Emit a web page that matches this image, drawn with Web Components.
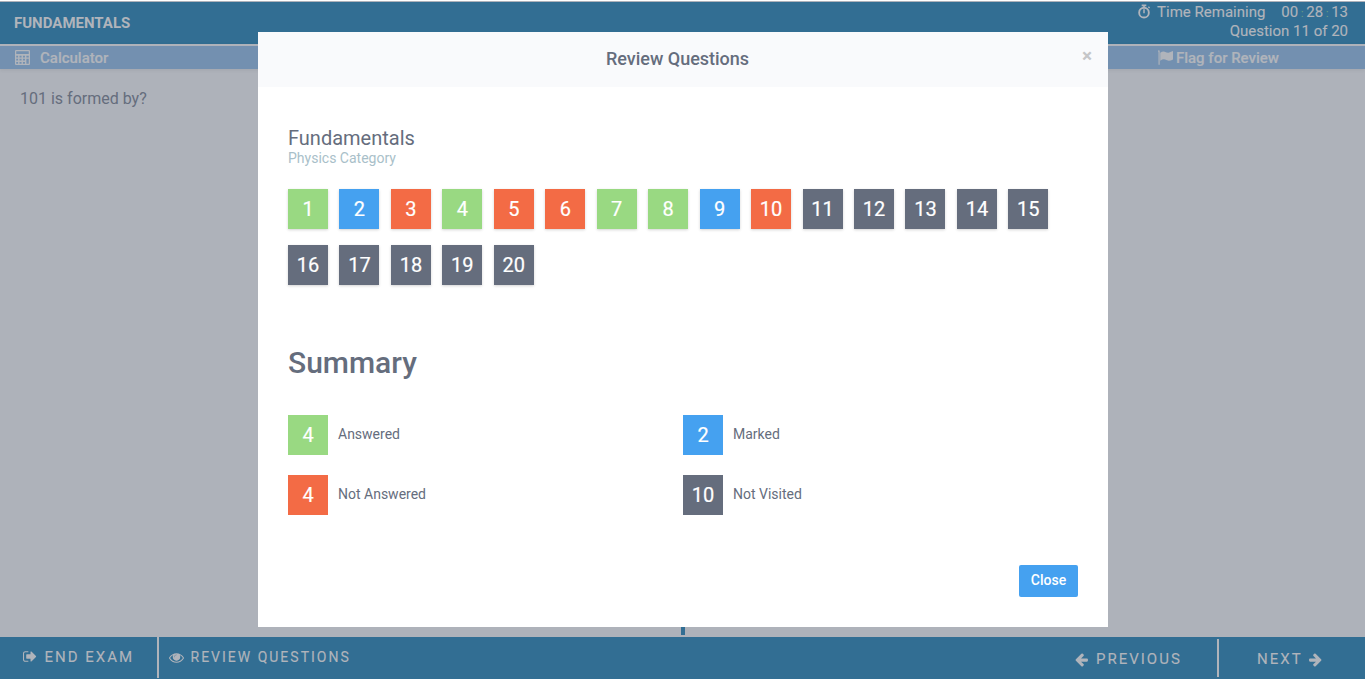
<!DOCTYPE html>
<html lang="en">
<head>
<meta charset="utf-8">
<title>Fundamentals</title>
<style>
html, body { margin: 0; height: 100%; overflow: hidden; }
body { font-family: Roboto, "Liberation Sans", sans-serif; color: #656d7d; background: #aeb2ba; }
</style>
</head>
<body>
<exam-page></exam-page>
<script>
const ICONS = {
  out: '<path d="M640 1440q0 4 1 20t.5 26.5-3 23.5-10 19.5-20.5 6.5h-320q-119 0-203.5-84.5t-84.5-203.5v-704q0-119 84.5-203.5t203.5-84.5h320q13 0 22.5 9.5t9.5 22.5q0 4 1 20t.5 26.5-3 23.5-10 19.5-20.5 6.5h-320q-66 0-113 47t-47 113v704q0 66 47 113t113 47h312l11.5 1 11.5 3 8 5.5 7 9 2 13.5zm928-544q0 26-19 45l-544 544q-19 19-45 19t-45-19-19-45v-288h-448q-26 0-45-19t-19-45v-384q0-26 19-45t45-19h448v-288q0-26 19-45t45-19 45 19l544 544q19 19 19 45z"/>',
  eye: '<path d="M1664 960q-152-236-381-353 61 104 61 225 0 185-131.5 316.5t-316.5 131.5-316.5-131.5-131.5-316.5q0-121 61-225-229 117-381 353 133 205 333.5 326.5t434.5 121.5 434.5-121.5 333.5-326.5zm-720-384q0-20-14-34t-34-14q-125 0-214.5 89.5t-89.5 214.5q0 20 14 34t34 14 34-14 14-34q0-86 61-147t147-61q20 0 34-14t14-34zm848 384q0 34-20 69-140 230-376.5 368.5t-499.5 138.5-499.5-139-376.5-368q-20-35-20-69t20-69q140-229 376.5-368t499.5-139 499.5 139 376.5 368q20 35 20 69z"/><circle cx="896" cy="850" r="400" opacity=".55"/>',
  left: '<path d="M1664 896v128q0 53-32.5 90.5t-84.5 37.5h-704l293 294q38 36 38 90t-38 90l-75 76q-37 37-90 37-52 0-91-37l-651-652q-37-37-37-90 0-52 37-91l651-650q38-38 91-38 52 0 90 38l75 74q38 38 38 91t-38 91l-293 293h704q52 0 84.5 37.5t32.5 90.5z"/>',
  right: '<path d="M1600 960q0 54-37 91l-651 651q-39 37-91 37-51 0-90-37l-75-75q-38-38-38-91t38-91l293-293h-704q-52 0-84.5-37.5t-32.5-90.5v-128q0-53 32.5-90.5t84.5-37.5h704l-293-294q-38-36-38-90t38-90l75-75q38-38 90-38 53 0 91 38l651 651q37 35 37 90z"/>',
  calc: '<path fill-rule="evenodd" d="M128 0H1664Q1792 0 1792 128V1664Q1792 1792 1664 1792H128Q0 1792 0 1664V128Q0 0 128 0ZM150 150V470H1640V150ZM150 680V890H370V680ZM540 680V890H780V680ZM950 680V890H1190V680ZM1360 680V890H1640V680ZM150 1060V1260H370V1060ZM540 1060V1260H780V1060ZM950 1060V1260H1190V1060ZM150 1430V1640H370V1430ZM540 1430V1640H780V1430ZM950 1430V1640H1190V1430ZM1360 1060V1640H1640V1060Z"/>',
  watch: '<path d="M600 0h592v210h-190v180h-212v-180h-190zM1400 350l120-120 150 150-120 120z"/><circle cx="896" cy="1040" r="620" fill="none" stroke="currentColor" stroke-width="240"/><path d="M800 620h192v500h-192z"/>',
  flag: '<path d="M0 128Q0 40 100 40T200 128V1750H60V230Q0 200 0 128Z"/><path d="M270 330Q560 120 800 200Q1100 350 1250 320Q1450 290 1792 130V1120Q1500 1290 1280 1280Q1100 1260 850 1140Q600 1050 270 1280Z"/>'
};

function define(name, markup, setup) {
  const template = document.createElement('template');
  template.innerHTML = markup;
  customElements.define(name, class extends HTMLElement {
    constructor() {
      super();
      this.attachShadow({ mode: 'open' }).append(template.content.cloneNode(true));
    }
    connectedCallback() { if (setup) setup(this, this.shadowRoot); }
  });
}

define('exam-icon', `<style>
:host { display: inline-block; flex: none; width: 15px; height: 15px; }
svg { display: block; width: 100%; height: 100%; fill: currentColor; overflow: visible; }
</style><svg viewBox="0 0 1792 1792"></svg>`,
(el, root) => { root.querySelector('svg').innerHTML = ICONS[el.getAttribute('name')]; });

define('number-tile', `<style>
:host { display: block; flex: none; box-sizing: border-box; width: 40px; height: 40px; font-size: 20px; line-height: 41px; text-align: center; color: #fff; background: #656d7d; -webkit-text-stroke: .2px #fff; }
:host([state="answered"]) { background: #99d982; }
:host([state="marked"]) { background: #45a1f0; }
:host([state="missed"]) { background: #f36b45; }
:host([raised]) { box-shadow: 0 1px 3px rgba(0,0,0,.12), 0 1px 2px rgba(0,0,0,.06); }
</style><slot></slot>`);

define('question-grid', `<style>
:host { display: grid; grid-template-columns: repeat(15, 51.455px); row-gap: 16px; }
</style>`,
(el, root) => {
  const codes = { a: 'answered', m: 'marked', n: 'missed', v: 'unvisited' };
  [...el.getAttribute('states')].forEach((code, i) => {
    const tile = document.createElement('number-tile');
    tile.setAttribute('state', codes[code]);
    tile.setAttribute('raised', '');
    tile.textContent = i + 1;
    root.append(tile);
  });
});

define('summary-item', `<style>
:host { display: flex; gap: 10px; height: 40px; font-size: 14px; line-height: 38px; }
</style><number-tile></number-tile><span><slot></slot></span>`,
(el, root) => {
  const tile = root.querySelector('number-tile');
  tile.setAttribute('state', el.getAttribute('state'));
  tile.textContent = el.getAttribute('count');
});

define('exam-header', `<style>
:host { display: block; color: #b0b4bb; border-top: 1px solid #fff; }
.bar { display: flex; justify-content: space-between; box-sizing: border-box; height: 43px; padding: 0 17px 0 14px; background: #326e93; border-top: 1px solid #aeb2ba; }
.title { font-weight: 700; font-size: 15px; line-height: 43px; }
.status { padding-top: 1px; text-align: right; font-size: 15px; line-height: 19px; -webkit-text-stroke: .15px currentColor; }
.time { display: flex; align-items: center; justify-content: flex-end; height: 19px; }
.time exam-icon { width: 14px; height: 15px; margin: -2px 6px 0 0; }
.clock { margin-left: 16px; }
.clock i { font-style: normal; font-size: 10px; padding: 0 2.8px; color: #6f9f83; }
.tools { display: flex; justify-content: space-between; height: 23px; padding: 0 86px 0 15px; border-top: 2px solid #aeb2ba; background: #7390b0; font-weight: 500; font-size: 15px; line-height: 24px; -webkit-text-stroke: .2px currentColor; box-shadow: 0 1px 4px rgba(0,0,0,.08); }
.tools span { display: flex; align-items: center; }
.calc { gap: 10px; }
.flag { gap: 3px; }
</style>
<div class="bar"><div class="title">FUNDAMENTALS</div>
<div class="status"><div class="time"><exam-icon name="watch"></exam-icon><span>Time Remaining</span><span class="clock">00<i>:</i>28<i>:</i>13</span></div><div>Question 11 of 20</div></div></div>
<div class="tools"><span class="calc"><exam-icon name="calc"></exam-icon>Calculator</span><span class="flag"><exam-icon name="flag"></exam-icon>Flag for Review</span></div>`);

define('exam-footer', `<style>
:host { display: flex; box-sizing: border-box; height: 42px; background: #326e93; color: #b0b4bb; font-size: 15px; letter-spacing: 2px; line-height: 40px; -webkit-text-stroke: .15px currentColor; }
div { display: flex; align-items: center; box-sizing: border-box; white-space: nowrap; height: 40px; }
.end { width: 159px; height: 41px; padding: 0 0 2px 23px; gap: 6.5px; border-right: 2px solid #b0b4bb; }
.review { padding-left: 9.5px; gap: 7px; font-size: 14px; }
.prev { margin-left: auto; width: 145px; gap: 7px; height: 38px; margin-top: 2px; padding-top: 2px; border-right: 2px solid #b0b4bb; }
.next { width: 146px; padding: 2px 0 0 38px; gap: 5px; height: 38px; margin-top: 2px; }
</style>
<div class="end"><exam-icon name="out"></exam-icon><span>END EXAM</span></div>
<div class="review"><exam-icon name="eye"></exam-icon><span>REVIEW QUESTIONS</span></div>
<div class="prev"><exam-icon name="left"></exam-icon><span>PREVIOUS</span></div>
<div class="next"><span>NEXT</span><exam-icon name="right"></exam-icon></div>`);

define('review-dialog', `<style>
:host { display: flex; flex-direction: column; box-sizing: border-box; width: 850px; height: 595px; background: #fff; }
header { display: grid; grid-template-columns: 1fr auto 1fr; height: 55px; padding: 0 16px 0 5px; background: #f9fafc; line-height: 54px; }
h2 { grid-column: 2; margin: 0; font-size: 18px; font-weight: 500; }
.x { justify-self: end; font-size: 19px; font-weight: 700; color: #c5c6c8; line-height: 48px; }
main { padding: 39px 30px 0; }
h3 { margin: 0; font-weight: 400; font-size: 20px; line-height: 24px; }
p { margin: 0 0 23px; color: #a9bfc9; font-size: 14px; line-height: 16px; }
h1 { margin: 60px 0 35px; font-weight: 500; font-size: 30px; line-height: 35px; }
.summary { display: grid; grid-template-columns: 395px 395px; row-gap: 20px; }
button { display: block; margin: 50px 0 0 auto; width: 59px; height: 32px; padding: 0 0 2px; border: 0; border-radius: 2px; background: #45a1f0; color: #fff; font: 500 14px Roboto, sans-serif; }
</style>
<header><h2>Review Questions</h2><span class="x">×</span></header>
<main><h3>Fundamentals</h3><p>Physics Category</p>
<question-grid states="amnannaamnvvvvvvvvvv"></question-grid>
<h1>Summary</h1>
<div class="summary">
<summary-item state="answered" count="4">Answered</summary-item>
<summary-item state="marked" count="2">Marked</summary-item>
<summary-item state="missed" count="4">Not Answered</summary-item>
<summary-item state="unvisited" count="10">Not Visited</summary-item>
</div>
<button>Close</button></main>`);

define('exam-page', `<style>
:host { display: flex; flex-direction: column; height: 679px; }
.body { flex: 1; display: flex; flex-direction: column; justify-content: space-between; padding: 20px 20px 2px; font-size: 16px; line-height: 19px; }
.split { align-self: center; width: 4px; height: 9px; background: #326e93; }
.overlay { position: absolute; top: 32px; left: 258px; }
</style>
<exam-header></exam-header>
<div class="body"><span>101 is formed by?</span><span class="split"></span></div>
<exam-footer></exam-footer>
<review-dialog class="overlay"></review-dialog>`);
</script>
</body>
</html>
